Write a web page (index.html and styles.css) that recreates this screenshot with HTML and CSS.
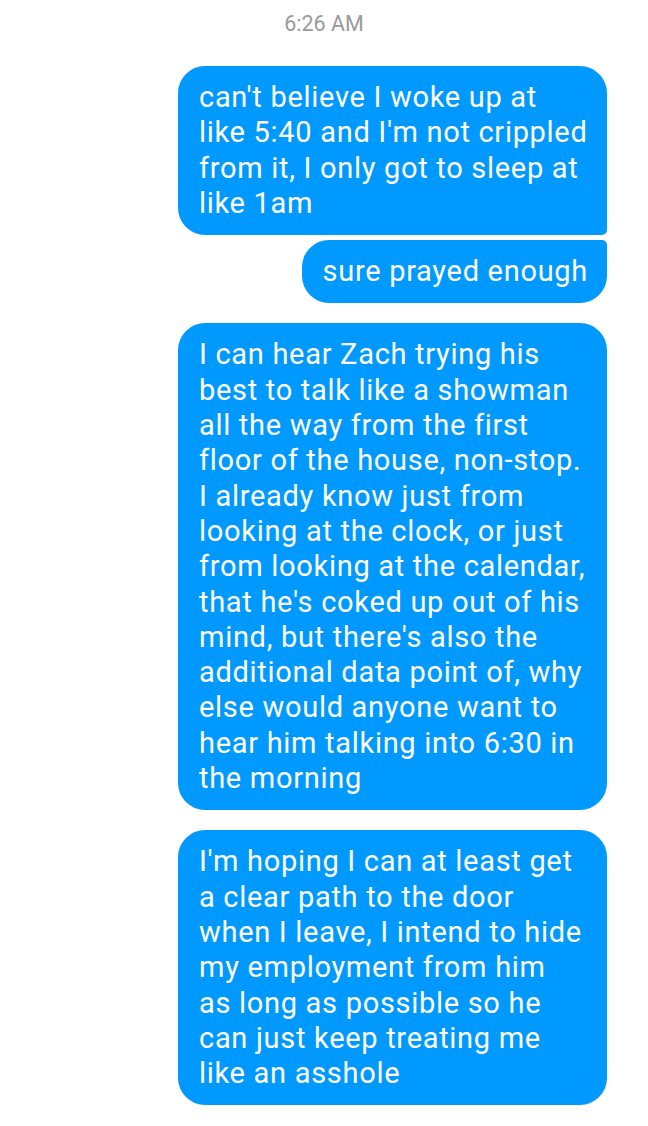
FILE: index.html
```html
<!DOCTYPE html>
<html>
<head>
<meta charset="utf-8">
<link rel="stylesheet" href="styles.css">
</head>
<body>
<div class="thread">
  <div class="time">6:26 AM</div>
  <div class="group">
    <div class="bubble wide first">can't believe I woke up at<br>like 5:40 and I'm not crippled<br>from it, I only got to sleep at<br>like 1am</div>
    <div class="bubble last">sure prayed enough</div>
  </div>
  <div class="group">
    <div class="bubble wide">I can hear Zach trying his<br>best to talk like a showman<br>all the way from the first<br>floor of the house, non-stop.<br>I already know just from<br>looking at the clock, or just<br>from looking at the calendar,<br>that he's coked up out of his<br>mind, but there's also the<br>additional data point of, why<br>else would anyone want to<br>hear him talking into 6:30 in<br>the morning</div>
  </div>
  <div class="group">
    <div class="bubble wide">I'm hoping I can at least get<br>a clear path to the door<br>when I leave, I intend to hide<br>my employment from him<br>as long as possible so he<br>can just keep treating me<br>like an asshole</div>
  </div>
</div>
</body>
</html>
```

FILE: styles.css
```css
html, body {
  margin: 0;
  padding: 0;
  background: #ffffff;
}
.thread {
  width: 648px;
  height: 1126px;
  box-sizing: border-box;
  padding: 10px 41px 0 0;
  display: flex;
  flex-direction: column;
  align-items: flex-end;
  gap: 20px;
  font-family: Roboto, "Liberation Sans", sans-serif;
  overflow: hidden;
}
.time {
  align-self: stretch;
  padding-left: 41px;
  text-align: center;
  color: #9a9a9a;
  font-size: 21.5px;
  line-height: 28px;
  margin-bottom: 8px;
}
.group {
  display: flex;
  flex-direction: column;
  align-items: flex-end;
  gap: 5px;
}
.bubble {
  background: #0099ff;
  color: #ffffff;
  font-size: 29px;
  letter-spacing: 0.7px;
  line-height: 35.3px;
  padding: 14px 19px 14px 21px;
  border-radius: 27px;
  white-space: nowrap;
}
.bubble.wide {
  width: 429px;
  box-sizing: border-box;
}
.bubble.first {
  border-bottom-right-radius: 5px;
}
.bubble.last {
  border-top-right-radius: 5px;
}
```
